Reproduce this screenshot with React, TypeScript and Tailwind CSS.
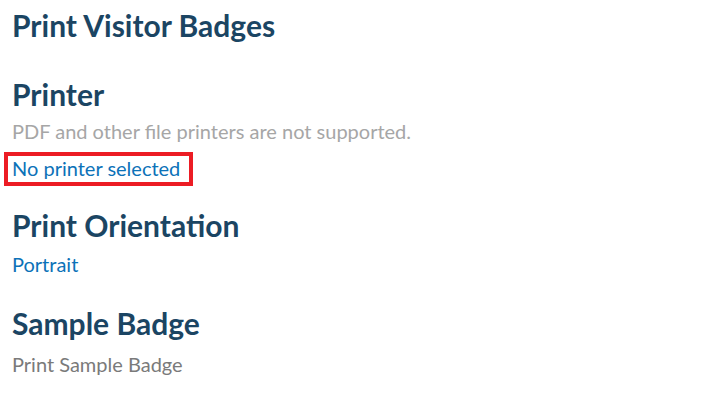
export default function App() {
  return (
    <div className="w-[708px] h-[406px] bg-white pl-3 pt-[7px]" style={{ fontFamily: "Lato, 'Noto Sans', sans-serif" }}>
      <h1 className="text-[30px] font-bold text-[#1b4563] leading-[36px]">Print Visitor Badges</h1>
      <h2 className="mt-[33px] text-[30px] font-bold text-[#1b4563] leading-[36px]">Printer</h2>
      <p className="text-[20px] text-[#a6a6a6] leading-[26px] mt-[6px]">PDF and other file printers are not supported.</p>
      <div className="-ml-2 mt-[8px] w-[189px] h-[34px] border-4 border-[#ec1c24] pl-1 flex items-start">
        <span className="text-[20px] text-[#0c72b8] leading-[24px]">No printer selected</span>
      </div>
      <h2 className="mt-[21px] text-[30px] font-bold text-[#1b4563] leading-[36px]">Print Orientation</h2>
      <p className="text-[20px] text-[#0c72b8] leading-[26px] mt-[8px]">Portrait</p>
      <h2 className="mt-[28px] text-[30px] font-bold text-[#1b4563] leading-[36px]">Sample Badge</h2>
      <p className="text-[20px] text-[#7a7a7a] leading-[26px] mt-[10px]">Print Sample Badge</p>
    </div>
  );
}
